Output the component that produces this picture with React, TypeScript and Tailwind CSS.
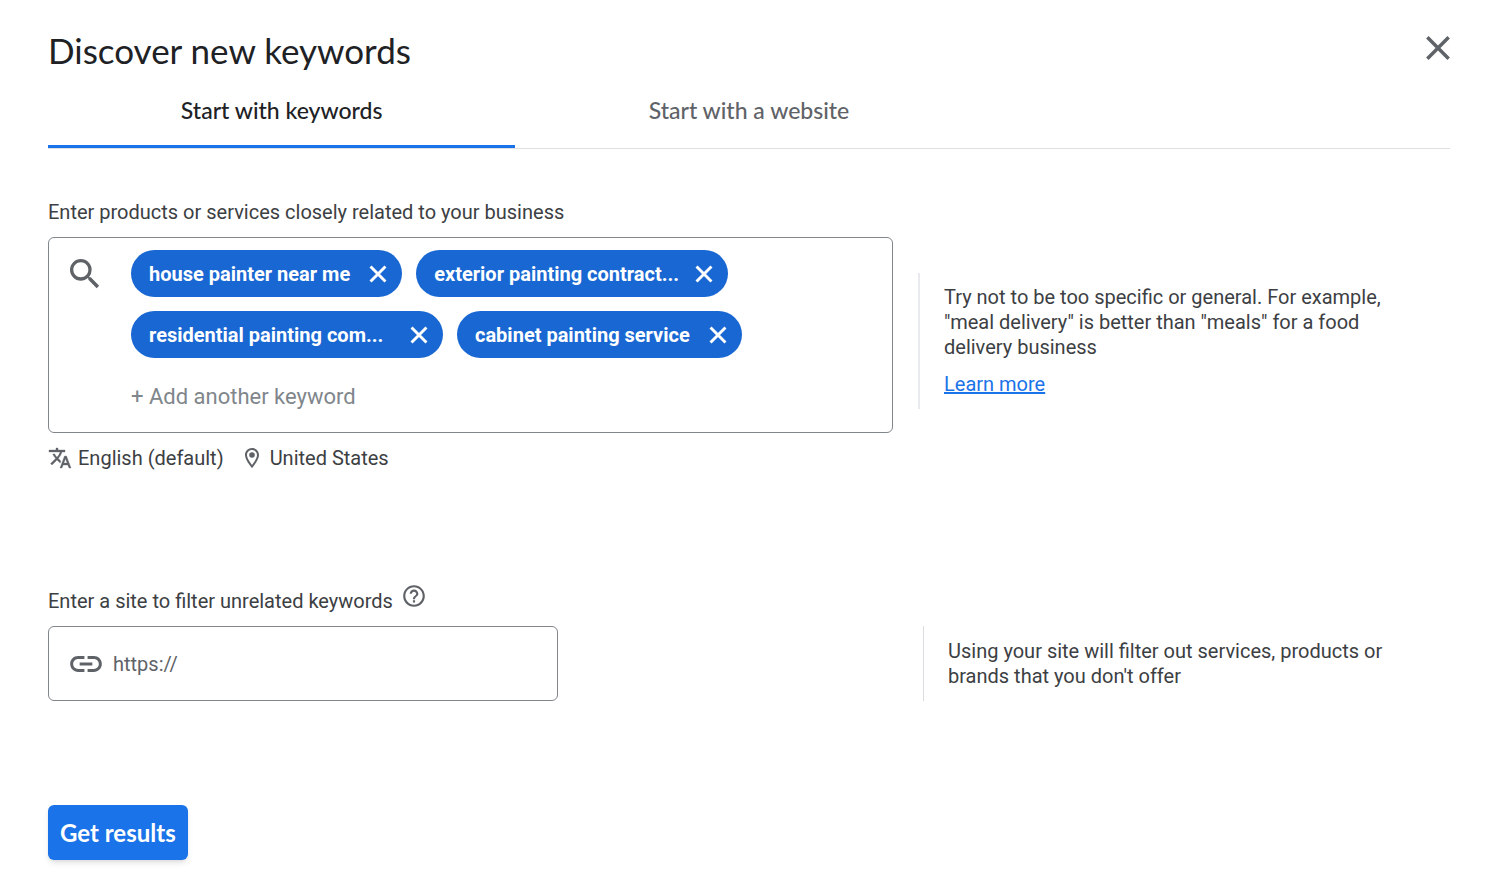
import { useState } from "react";
import { MdHelpOutline, MdLink, MdSearch } from "react-icons/md";

type Keyword = { label: string; clipped?: boolean };

const initialKeywords: Keyword[] = [
  { label: "house painter near me" },
  { label: "exterior painting contract...", clipped: true },
  { label: "residential painting com...", clipped: true },
  { label: "cabinet painting service" },
];

const tabs = ["Start with keywords", "Start with a website"];

function CloseIcon({ className, weight }: { className: string; weight: number }) {
  return (
    <svg viewBox="0 0 24 24" className={className} fill="none" stroke="currentColor" strokeWidth={weight} aria-hidden="true">
      <path d="M5.6 5.6 18.4 18.4M18.4 5.6 5.6 18.4" />
    </svg>
  );
}

function PlaceIcon({ className }: { className: string }) {
  return (
    <svg viewBox="0 0 24 24" className={className} fill="currentColor" aria-hidden="true">
      <path d="M12 2C8.13 2 5 5.13 5 9c0 5.25 7 13 7 13s7-7.75 7-13c0-3.87-3.13-7-7-7zM7 9c0-2.76 2.24-5 5-5s5 2.24 5 5c0 2.88-2.88 7.19-5 9.88C9.92 16.21 7 11.85 7 9z" />
      <circle cx="12" cy="9" r="2.8" />
    </svg>
  );
}

function TranslateIcon({ className }: { className: string }) {
  return (
    <svg
      viewBox="0 0 24 24"
      className={className}
      fill="currentColor"
      stroke="currentColor"
      strokeWidth={0.35}
      aria-hidden="true"
    >
      <path d="m12.87 15.07-2.54-2.51.03-.03A17.52 17.52 0 0 0 14.07 6H17V4h-7V2H8v2H1v1.99h11.17C11.5 7.92 10.44 9.75 9 11.35 8.07 10.32 7.3 9.19 6.69 8h-2c.73 1.63 1.73 3.17 2.98 4.56l-5.09 5.02L4 19l5-5 3.11 3.11.76-2.04zM18.5 10h-2L12 22h2l1.12-3h4.75L21 22h2l-4.5-12zm-2.62 7 1.62-4.33L19.12 17h-3.24z" />
    </svg>
  );
}

function Chip({ keyword, onRemove }: { keyword: Keyword; onRemove: () => void }) {
  return (
    <li className="flex h-[47px] items-center gap-3.5 rounded-full bg-[#1967d2] pr-2.5 pl-[18px] text-xl font-bold text-white">
      <span className={keyword.clipped ? "w-[242px] whitespace-nowrap" : "whitespace-nowrap"}>
        {keyword.label}
      </span>
      <button type="button" aria-label={`Remove ${keyword.label}`} onClick={onRemove}>
        <CloseIcon className="size-7" weight={2.5} />
      </button>
    </li>
  );
}

export default function App() {
  const [keywords, setKeywords] = useState(initialKeywords);
  const [activeTab, setActiveTab] = useState(0);

  return (
    <main className="min-h-screen bg-white pt-7 pr-[35px] pb-6 pl-12 font-['Roboto',sans-serif] text-[#3c4043]">
      <header className="flex items-start justify-between">
        <h1 className="font-['Lato',sans-serif] text-[35px] leading-[45px] text-[#202124]">
          Discover new keywords
        </h1>
        <button type="button" aria-label="Close" className="-mr-2 text-[#5f6368]">
          <CloseIcon className="size-10" weight={2.1} />
        </button>
      </header>

      <div role="tablist" className="grid grid-cols-3 border-b border-[#e0e0e0]">
        {tabs.map((tab, index) => (
          <button
            key={tab}
            type="button"
            role="tab"
            aria-selected={activeTab === index}
            onClick={() => setActiveTab(index)}
            className={
              activeTab === index
                ? "h-[75px] border-b-3 border-[#1a73e8] pt-0.5 font-['Lato',sans-serif] text-[23px] font-medium text-[#202124]"
                : "h-[75px] border-b-3 border-transparent pt-0.5 font-['Lato',sans-serif] text-[23px] font-medium text-[#5f6368]"
            }
          >
            {tab}
          </button>
        ))}
      </div>

      <section className="mt-[49px]">
        <label htmlFor="keyword" className="block text-xl leading-7">
          Enter products or services closely related to your business
        </label>
        <div className="mt-[11px] grid grid-cols-[845fr_532fr] items-start gap-[25px]">
          <div className="flex items-start rounded-md border border-[#80868b] py-3">
            <MdSearch className="mt-1 ml-4 size-10 shrink-0 text-[#5f6368]" />
            <div className="ml-[26px] flex-1">
              <ul className="flex flex-wrap gap-3.5">
                {keywords.map((keyword) => (
                  <Chip
                    key={keyword.label}
                    keyword={keyword}
                    onRemove={() => setKeywords(keywords.filter((k) => k !== keyword))}
                  />
                ))}
              </ul>
              <input
                id="keyword"
                type="text"
                placeholder="+ Add another keyword"
                className="mt-3.5 h-12 w-full text-[22px] outline-none placeholder:text-[#80868b]"
              />
            </div>
          </div>
          <aside className="mt-9 border-l-2 border-[#e8eaed] py-3 pl-6 text-xl leading-[25px]">
            <p className="max-w-[445px]">
              Try not to be too specific or general. For example, "meal delivery" is better than
              "meals" for a food delivery business
            </p>
            <a href="#learn-more" className="mt-3 inline-block text-[#1a73e8] underline">
              Learn more
            </a>
          </aside>
        </div>
        <div className="mt-[11px] flex items-center text-xl leading-7">
          <TranslateIcon className="mr-1.5 size-6 text-[#5f6368]" />
          <span>English (default)</span>
          <PlaceIcon className="mr-1.5 ml-4 size-6 text-[#5f6368]" />
          <span>United States</span>
        </div>
      </section>

      <section className="mt-[115px]">
        <div className="flex items-start gap-2">
          <label htmlFor="site" className="text-xl leading-7">
            Enter a site to filter unrelated keywords
          </label>
          <button type="button" aria-label="Help" className="-mt-1 text-[#5f6368]">
            <MdHelpOutline className="size-[26px]" />
          </button>
        </div>
        <div className="mt-[11px] grid grid-cols-[850fr_527fr] gap-[25px]">
          <div className="flex h-[75px] w-3/5 items-center rounded-md border border-[#80868b]">
            <MdLink className="ml-[18px] size-[38px] shrink-0 text-[#5f6368]" />
            <input
              id="site"
              type="url"
              placeholder="https://"
              className="ml-2 min-w-0 flex-1 text-xl outline-none placeholder:text-[#5f6368]"
            />
          </div>
          <aside className="flex items-center border-l border-[#dadce0] pl-6 text-xl leading-[25px]">
            <p className="max-w-[445px]">
              Using your site will filter out services, products or brands that you don't offer
            </p>
          </aside>
        </div>
      </section>

      <button
        type="button"
        className="mt-[104px] h-[55px] rounded-md bg-[#1a73e8] px-3 font-['Lato',sans-serif] text-2xl font-bold text-white shadow-md"
      >
        Get results
      </button>
    </main>
  );
}
